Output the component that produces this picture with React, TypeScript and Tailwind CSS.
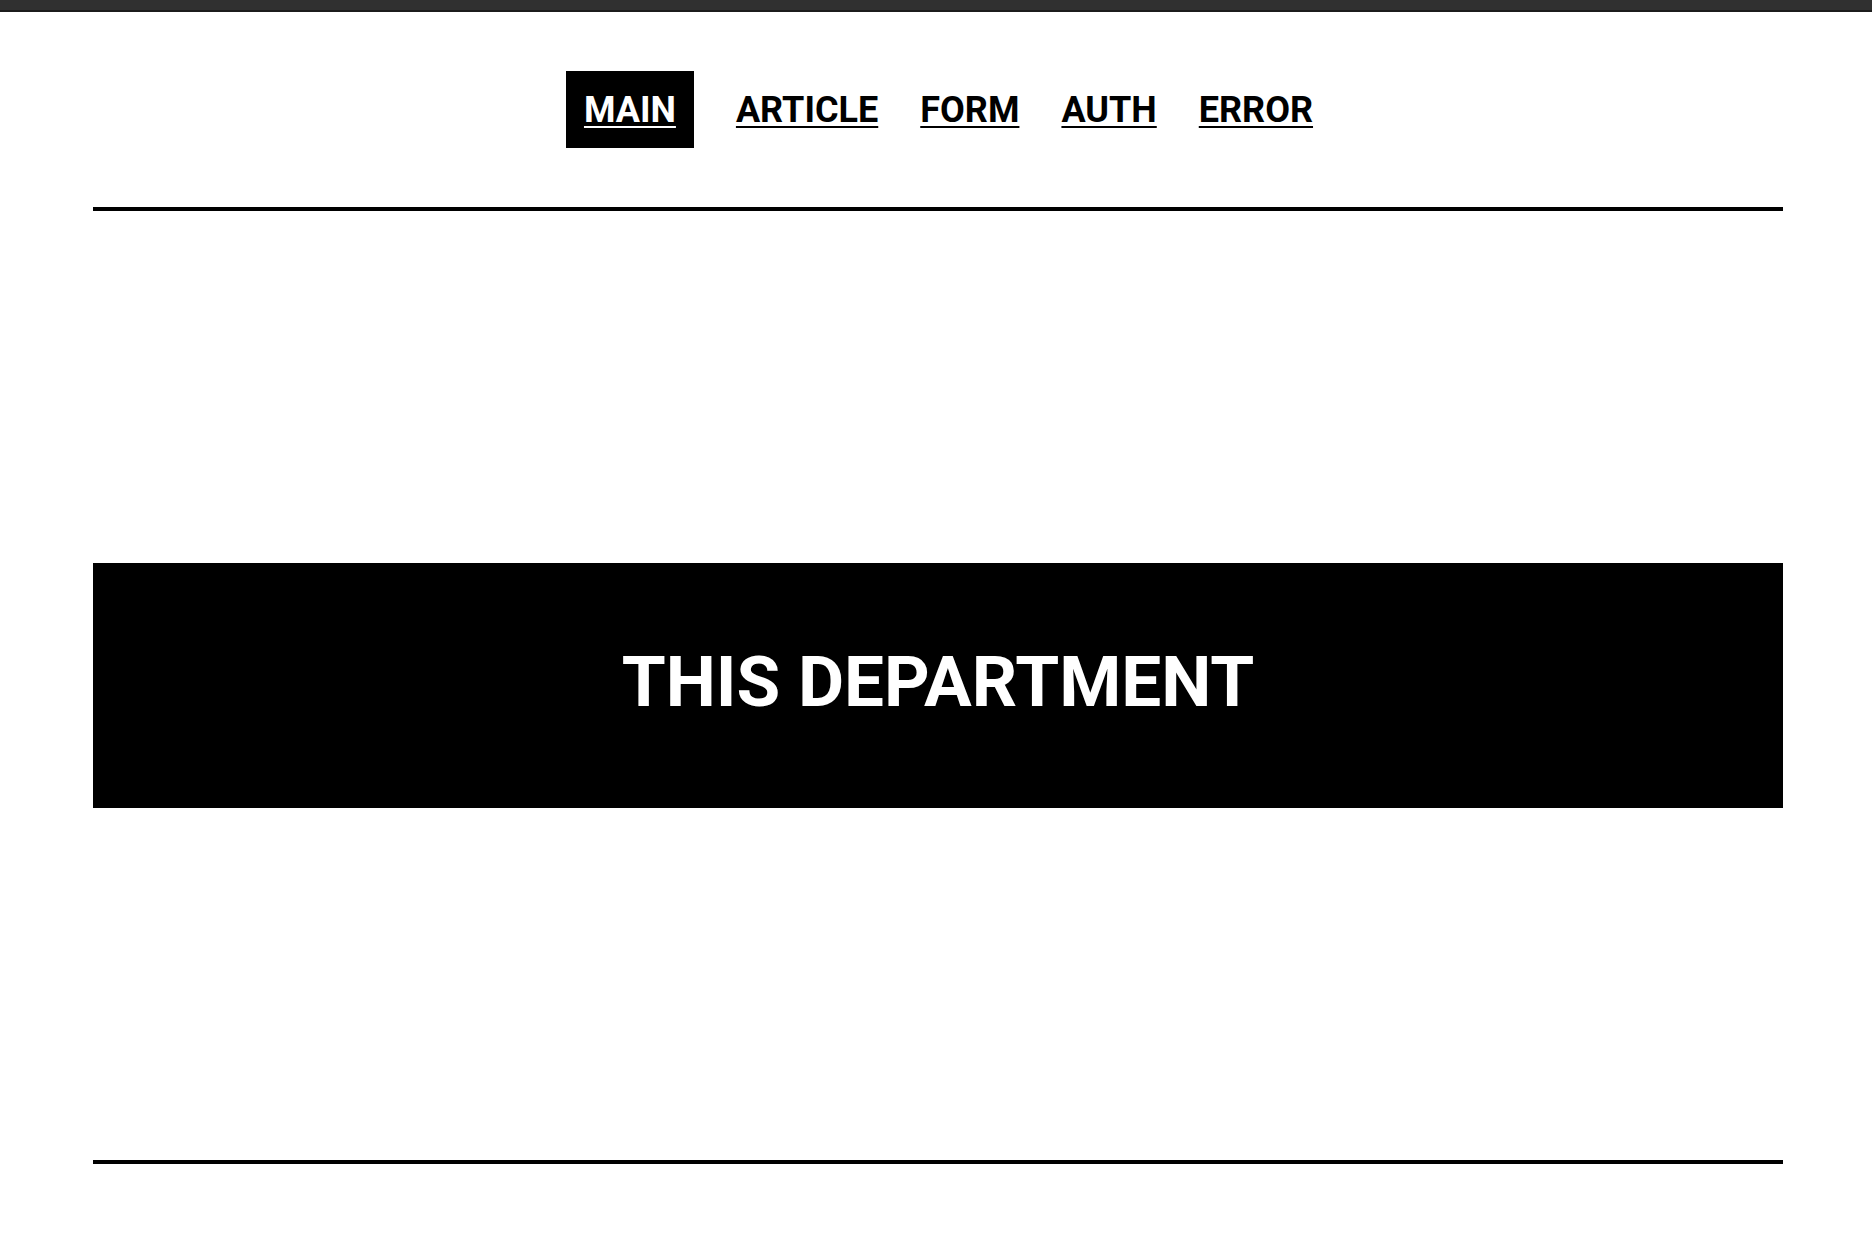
import React from "react";

const items = ["MAIN", "ARTICLE", "FORM", "AUTH", "ERROR"];

export default function App() {
  return (
    <div className="min-h-screen bg-white font-['Roboto',sans-serif]">
      <div className="h-[10px] bg-[#303030]" />
      <div className="h-[2px] bg-[#1c1c1c]" />
      <div className="ml-[93px] mr-[89px]">
        <nav className="flex justify-center gap-[42px] pl-[3px] pt-[59px]">
          {items.map((it, i) => (
            <a
              key={it}
              href="#"
              className={
                i === 0
                  ? "flex h-[77px] items-center bg-black px-[18px] text-[36px] font-bold leading-none text-white underline decoration-2 underline-offset-[4px]"
                  : "flex h-[77px] items-center text-[36px] font-bold leading-none text-black underline decoration-2 underline-offset-[4px]"
              }
            >
              {it}
            </a>
          ))}
        </nav>
        <div className="mt-[59px] h-[4px] bg-black" />
        <div className="mt-[352px] flex h-[245px] items-center justify-center bg-black pb-[8px]">
          <h1 className="text-[71px] font-bold leading-none text-white">THIS DEPARTMENT</h1>
        </div>
        <div className="mt-[352px] h-[4px] bg-black" />
      </div>
    </div>
  );
}
